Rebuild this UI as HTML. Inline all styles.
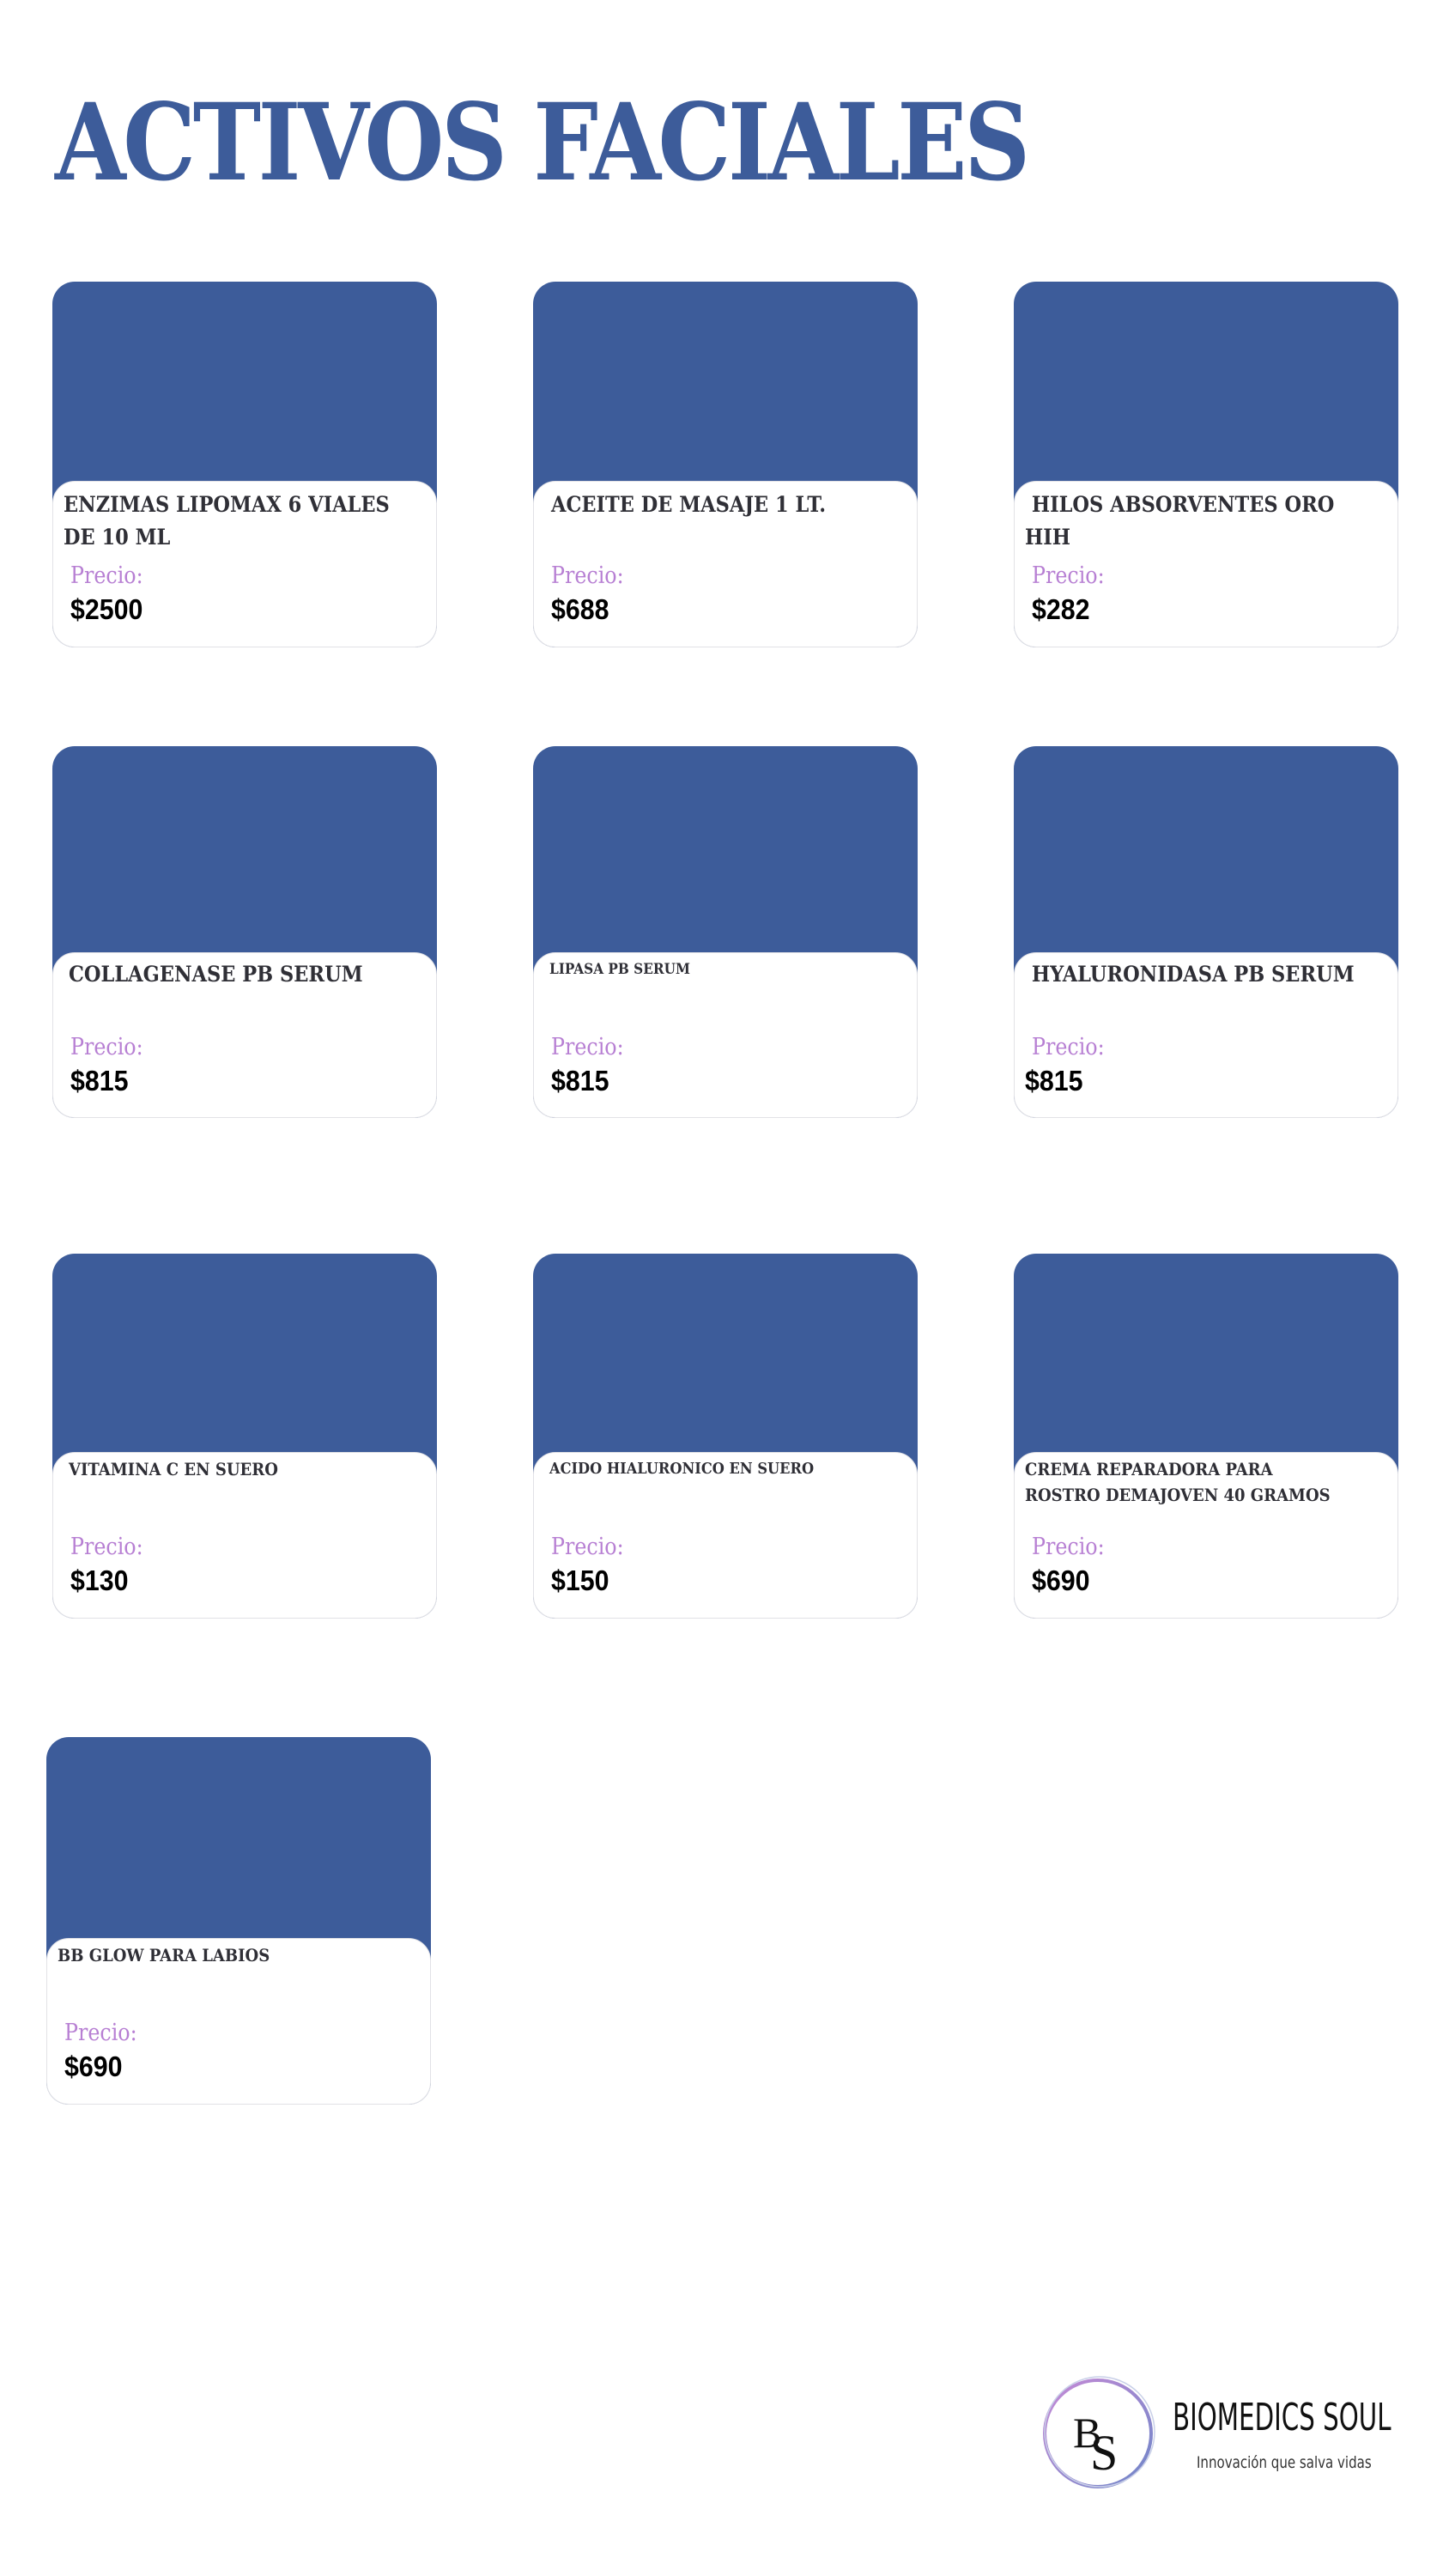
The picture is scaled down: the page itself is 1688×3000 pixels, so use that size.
<!DOCTYPE html>
<html><head><meta charset="utf-8"><style>
body{margin:0;width:1688px;height:3000px;background:#fff;position:relative;overflow:hidden;font-family:"Liberation Sans",sans-serif}
h1{position:absolute;left:64px;top:94px;margin:0;font-family:"DejaVu Serif",serif;font-weight:bold;font-size:124px;color:#3d5c9a;letter-spacing:-4px;transform:scaleX(0.86);transform-origin:left;white-space:nowrap}
.card{position:absolute;width:448px;height:426px;background:#3d5c9a;border-radius:26px}
.w{position:absolute;left:0;right:0;bottom:0;background:#fff;border:1px solid #e2e2e6;border-radius:26px;box-sizing:border-box}
.n{position:absolute;left:12px;top:8px;font-family:"DejaVu Serif",serif;font-weight:bold;color:#2f2f36;font-size:25px;line-height:38px;transform:scaleX(0.9);transform-origin:left;width:444px}
.n.s{font-size:20px;line-height:30px}
.p{position:absolute;left:20px;top:94px;font-family:"DejaVu Serif",serif;color:#b77fd3;font-size:27px;transform:scaleX(0.88);transform-origin:left}
.v{position:absolute;left:20px;top:130px;font-weight:bold;font-size:33px;color:#000;transform:scaleX(0.92);transform-origin:left}
</style></head><body>
<h1>ACTIVOS FACIALES</h1>

<div class="card" style="left:61px;top:328px"><div class="w" style="height:194px"><div class="n">ENZIMAS LIPOMAX 6 VIALES DE 10 ML</div><div class="p">Precio:</div><div class="v">$2500</div></div></div>
<div class="card" style="left:621px;top:328px"><div class="w" style="height:194px"><div class="n" style="left:20px">ACEITE DE MASAJE 1 LT.</div><div class="p">Precio:</div><div class="v">$688</div></div></div>
<div class="card" style="left:1181px;top:328px"><div class="w" style="height:194px"><div class="n">&nbsp;HILOS ABSORVENTES ORO HIH</div><div class="p">Precio:</div><div class="v">$282</div></div></div>

<div class="card" style="left:61px;top:869px;height:433px"><div class="w" style="height:193px"><div class="n" style="top:6px;left:18px">COLLAGENASE PB SERUM</div><div class="p">Precio:</div><div class="v">$815</div></div></div>
<div class="card" style="left:621px;top:869px;height:433px"><div class="w" style="height:193px"><div class="n s" style="font-size:17px;top:4px;left:18px">LIPASA PB SERUM</div><div class="p">Precio:</div><div class="v">$815</div></div></div>
<div class="card" style="left:1181px;top:869px;height:433px"><div class="w" style="height:193px"><div class="n" style="top:6px">&nbsp;HYALURONIDASA PB SERUM</div><div class="p">Precio:</div><div class="v" style="left:12px">$815</div></div></div>

<div class="card" style="left:61px;top:1460px;height:425px"><div class="w" style="height:194px"><div class="n s" style="top:4px;left:18px">VITAMINA C EN SUERO</div><div class="p">Precio:</div><div class="v">$130</div></div></div>
<div class="card" style="left:621px;top:1460px;height:425px"><div class="w" style="height:194px"><div class="n s" style="font-size:18px;top:4px;left:18px">ACIDO HIALURONICO EN SUERO</div><div class="p">Precio:</div><div class="v">$150</div></div></div>
<div class="card" style="left:1181px;top:1460px;height:425px"><div class="w" style="height:194px"><div class="n s" style="top:4px;left:12px;width:400px">CREMA REPARADORA PARA ROSTRO DEMAJOVEN 40 GRAMOS</div><div class="p">Precio:</div><div class="v">$690</div></div></div>

<div class="card" style="left:54px;top:2023px;height:428px"><div class="w" style="height:194px"><div class="n s" style="top:4px;left:12px">BB GLOW PARA LABIOS</div><div class="p">Precio:</div><div class="v">$690</div></div></div>

<svg style="position:absolute;left:1210px;top:2762px" width="140" height="145">
<defs><linearGradient id="g" x1="0" y1="0" x2="1" y2="1"><stop offset="0" stop-color="#c68ad6"/><stop offset="1" stop-color="#6f86c8"/></linearGradient></defs>
<circle cx="69" cy="72" r="62" fill="none" stroke="url(#g)" stroke-width="4"/>
<circle cx="71" cy="70" r="64" fill="none" stroke="#c9d0e8" stroke-width="1.5"/>
<text x="40" y="88" font-family="Liberation Serif,serif" font-size="50" fill="#111">B</text>
<text x="60" y="114" font-family="Liberation Serif,serif" font-size="58" fill="#111">S</text>
</svg>
<div style="position:absolute;left:1366px;top:2790px;font-family:'DejaVu Sans Condensed','DejaVu Sans',sans-serif;font-size:44px;color:#111;transform:scaleX(0.74);transform-origin:left;white-space:nowrap">BIOMEDICS SOUL</div>
<div style="position:absolute;left:1394px;top:2857px;font-family:'DejaVu Sans Condensed','DejaVu Sans',sans-serif;font-size:19px;color:#333;transform:scaleX(0.88);transform-origin:left;white-space:nowrap">Innovación que salva vidas</div>
</body></html>
